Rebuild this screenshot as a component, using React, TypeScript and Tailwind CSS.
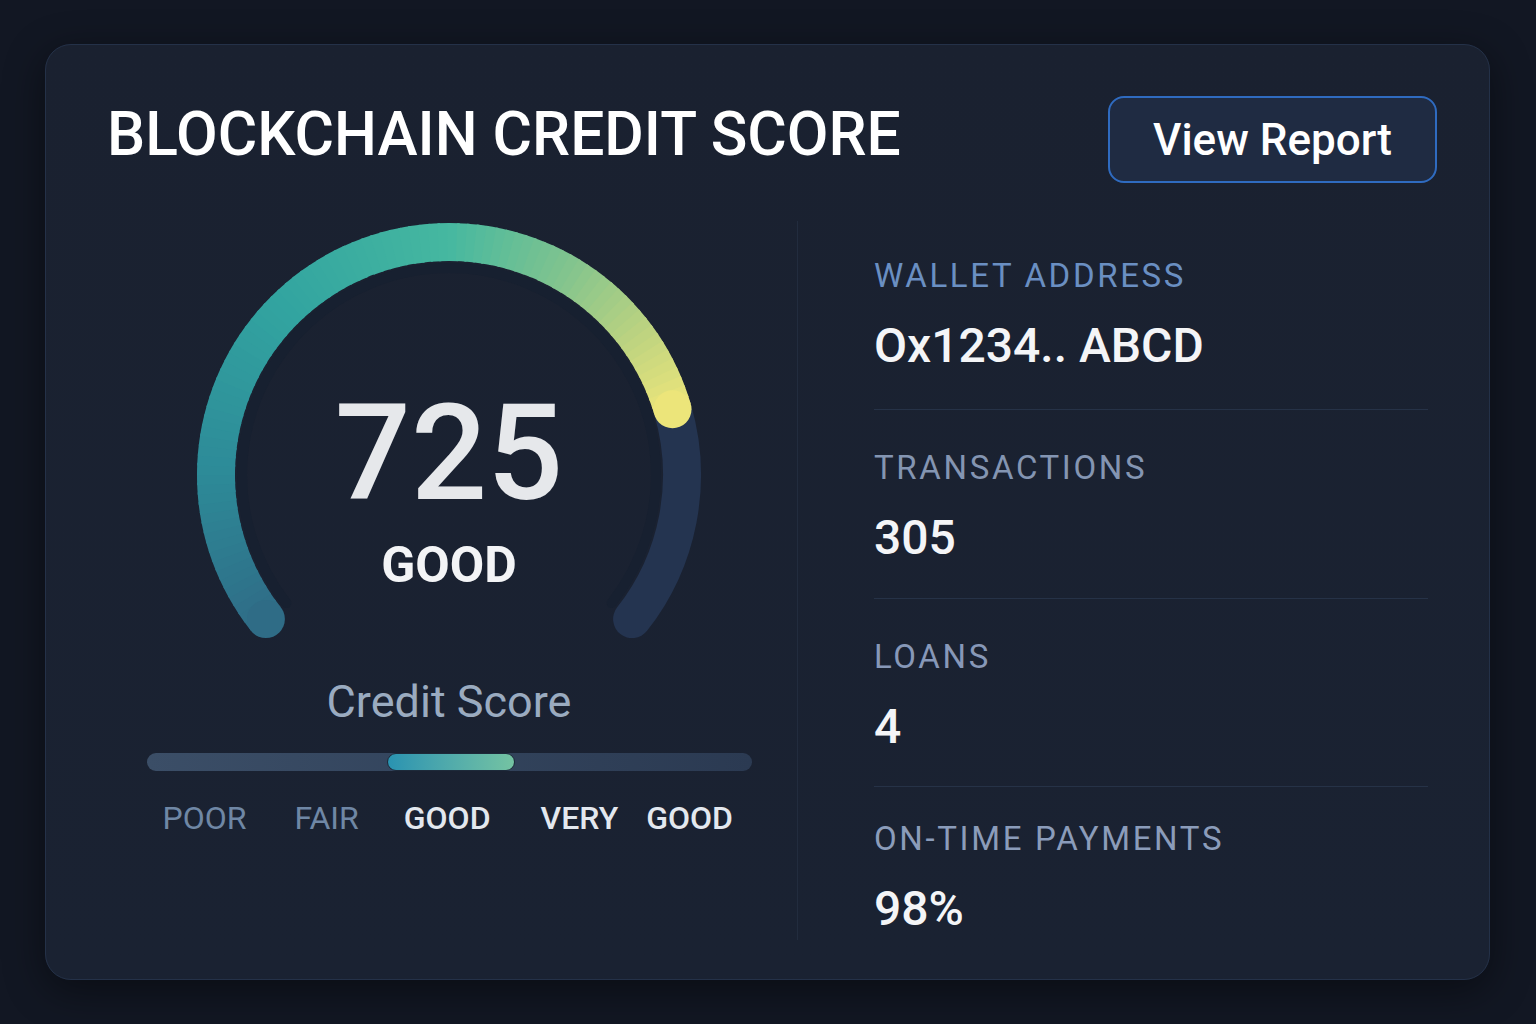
const FONT = { fontFamily: "Roboto, 'Noto Sans', sans-serif" };

type Stat = { label: string; value: string; labelColor: string; top: string; bottom: string };

const stats: Stat[] = [
  { label: "WALLET ADDRESS", value: "Ox1234.. ABCD", labelColor: "text-[#6a8fc2]", top: "", bottom: "border-b border-[#263247] pb-[39px]" },
  { label: "TRANSACTIONS", value: "305", labelColor: "text-[#8495b2]", top: "mt-[40px]", bottom: "border-b border-[#263247] pb-[36px]" },
  { label: "LOANS", value: "4", labelColor: "text-[#8798b8]", top: "mt-[40px]", bottom: "border-b border-[#263247] pb-[35px]" },
  { label: "ON-TIME PAYMENTS", value: "98%", labelColor: "text-[#8b9cba]", top: "mt-[34px]", bottom: "" },
];

// gauge geometry
const CX = 260;
const CY = 252;
const R = 233;
const SW = 38;
const START = 141.8;
const END = 398.2;
const VALUE = 343.6;

const stops: [number, string][] = [
  [141.8, "#2f6c86"],
  [180, "#2d8a98"],
  [225, "#32a4a0"],
  [270, "#46b8a0"],
  [300, "#82c48e"],
  [322, "#b9d281"],
  [343.6, "#ece57a"],
];

function hex(c: string) {
  return [1, 3, 5].map((i) => parseInt(c.slice(i, i + 2), 16));
}

function colorAt(a: number) {
  for (let i = 0; i < stops.length - 1; i++) {
    const [a0, c0] = stops[i];
    const [a1, c1] = stops[i + 1];
    if (a >= a0 && a <= a1) {
      const t = (a - a0) / (a1 - a0);
      const p = hex(c0);
      const q = hex(c1);
      const m = p.map((v, k) => Math.round(v + (q[k] - v) * t));
      return `rgb(${m[0]},${m[1]},${m[2]})`;
    }
  }
  return stops[stops.length - 1][1];
}

function pt(a: number, r = R) {
  const rad = (a * Math.PI) / 180;
  return [CX + r * Math.cos(rad), CY + r * Math.sin(rad)];
}

function arc(a0: number, a1: number, r = R) {
  const [x0, y0] = pt(a0, r);
  const [x1, y1] = pt(a1, r);
  const large = a1 - a0 > 180 ? 1 : 0;
  return `M ${x0} ${y0} A ${r} ${r} 0 ${large} 1 ${x1} ${y1}`;
}

function Gauge() {
  const n = 90;
  const step = (VALUE - START) / n;
  const segs = Array.from({ length: n }, (_, i) => {
    const a0 = START + i * step;
    const a1 = Math.min(a0 + step + 0.6, VALUE);
    return { d: arc(a0, a1), color: colorAt(a0 + step / 2) };
  });
  const [sx, sy] = pt(START);
  const [ex, ey] = pt(VALUE);

  return (
    <div className="relative h-[420px] w-[520px]">
      <svg width="520" height="420" viewBox="0 0 520 420">
        <path d={arc(START, END, 207)} fill="none" stroke="#172030" strokeWidth="10" strokeLinecap="round" />
        <path d={arc(VALUE, END)} fill="none" stroke="#243450" strokeWidth={SW} strokeLinecap="round" />
        {segs.map((s, i) => (
          <path key={i} d={s.d} fill="none" stroke={s.color} strokeWidth={SW} />
        ))}
        <circle cx={sx} cy={sy} r={SW / 2} fill={colorAt(START)} />
        <circle cx={ex} cy={ey} r={SW / 2} fill={colorAt(VALUE)} />
      </svg>
      <div className="absolute inset-x-0 top-[164px] flex flex-col items-center">
        <span className="text-[134px] leading-none font-medium text-[#e6e8eb]">725</span>
        <span className="mt-[19px] text-[50px] leading-none font-bold text-[#f3f4f6]">GOOD</span>
      </div>
    </div>
  );
}

function ScoreBar() {
  return (
    <div className="relative h-[18px] w-[605px] rounded-full bg-gradient-to-r from-[#3b4e67] to-[#2b3a52]">
      <div className="absolute left-[240px] top-0 h-[18px] w-[128px] rounded-full border border-[#1d2a3a] bg-gradient-to-r from-[#2993b1] to-[#74c3a2]" />
    </div>
  );
}

export default function App() {
  return (
    <div className="min-h-screen bg-[#121723] pl-[45px] pt-[44px]" style={FONT}>
      <div className="flex h-[936px] w-[1445px] flex-col rounded-[26px] border border-[#243148] bg-gradient-to-b from-[#1a2130] to-[#1a2232] shadow-[0_10px_40px_rgba(0,0,0,0.45)]">
        <header className="flex items-start justify-between pl-[61px] pr-[52px] pt-[51px]">
          <h1 className="mt-[9px] text-[60.5px] leading-none font-medium text-white">
            BLOCKCHAIN CREDIT SCORE
          </h1>
          <button className="flex h-[87px] w-[329px] items-center justify-center rounded-[16px] border-2 border-[#2f6bc0] bg-[#1f2b42] text-[44px] font-medium text-white">
            View Report
          </button>
        </header>

        <div className="mt-[38px] flex flex-1 pb-[39px]">
          <div className="flex w-[751px] flex-col items-center pl-[55px]">
            <div className="mt-[2px]">
              <Gauge />
            </div>
            <p className="mt-[33px] text-[45px] leading-[52px] text-[#9aabc0]">Credit Score</p>
            <div className="mt-[25px]">
              <ScoreBar />
            </div>
            <div className="mt-[28px] flex w-[605px] pl-[16px] text-[32px] leading-[38px]">
              <span className="text-[#6f87a5]">POOR</span>
              <span className="ml-[48px] text-[#6f87a5]">FAIR</span>
              <span className="ml-[45px] font-medium text-[#e3e8ef]">GOOD</span>
              <span className="ml-[50px] font-medium text-[#e3e8ef]">
                VERY<span className="ml-[28px]">GOOD</span>
              </span>
            </div>
          </div>

          <div className="w-px bg-[#222c3e]" />

          <div className="flex flex-1 flex-col pl-[76px] pr-[61px] pt-[37px]">
            {stats.map((s) => (
              <div key={s.label} className={s.bottom}>
                <p className={`${s.top} text-[33px] leading-[36px] tracking-[0.08em] ${s.labelColor}`}>
                  {s.label}
                </p>
                <p className="mt-[28px] text-[48px] leading-none font-medium text-[#f4f5f7]">
                  {s.value}
                </p>
              </div>
            ))}
          </div>
        </div>
      </div>
    </div>
  );
}
